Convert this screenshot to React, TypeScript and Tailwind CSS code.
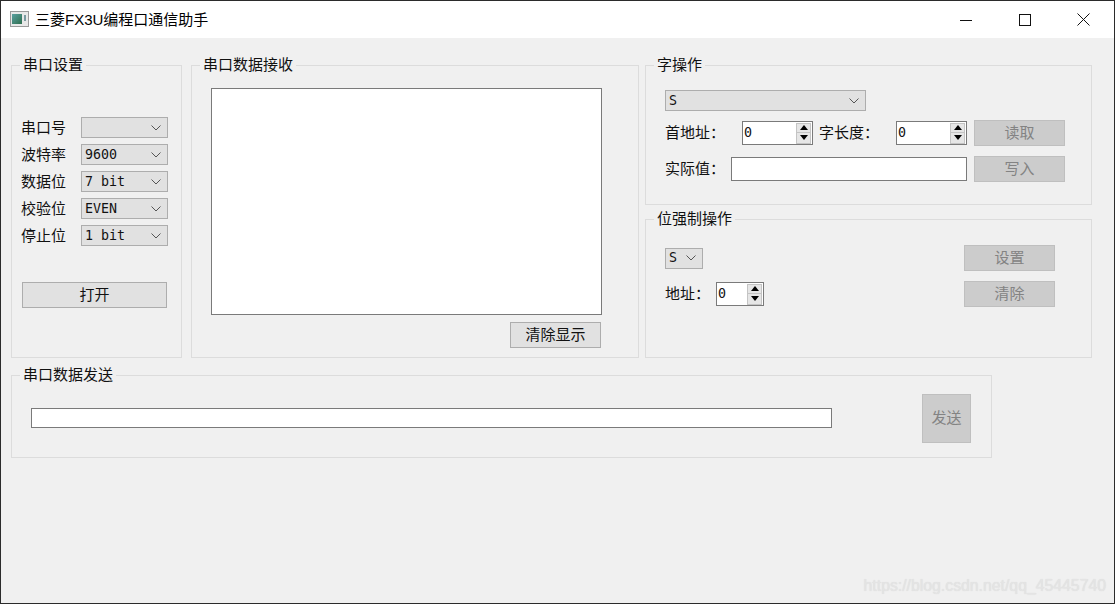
import React from 'react';

const monoFont = "font-['DejaVu_Sans_Mono','Noto_Sans_CJK_SC',monospace]";

const Group: React.FC<{ title: string; className: string; children?: React.ReactNode }> = ({ title, className, children }) => (
  <div className={`relative border border-[#dcdcdc] ${className}`}>
    <span className="absolute left-[8px] top-[-11px] bg-[#f0f0f0] px-[3px] text-[15px] leading-[20px] text-[#111]">{title}</span>
    {children}
  </div>
);

const Chevron = () => (
  <svg width="10" height="6" viewBox="0 0 10 6" className="shrink-0">
    <path d="M0.5 0.5 L5 5 L9.5 0.5" fill="none" stroke="#555" strokeWidth="1" />
  </svg>
);

const Combo: React.FC<{ value?: string; className: string }> = ({ value, className }) => (
  <div className={`flex h-[21px] items-center justify-between border border-[#adadad] bg-[#e1e1e1] pl-[3px] pr-[6px] ${className}`}>
    <span className={`${monoFont} text-[13.3px] leading-none text-[#111]`}>{value}</span>
    <Chevron />
  </div>
);

const Spin: React.FC<{ className: string }> = ({ className }) => (
  <div className={`flex h-[24px] items-center justify-between border border-[#7a7a7a] bg-white pl-[1px] pr-[1px] ${className}`}>
    <span className={`${monoFont} text-[13.3px] leading-none text-[#111]`}>0</span>
    <div className="flex flex-col">
      <div className="flex h-[10px] w-[15px] items-center justify-center border border-[#c4c4c4] bg-[#e6e6e6]">
        <svg width="8" height="5" viewBox="0 0 8 5"><path d="M4 0 L8 5 L0 5 Z" fill="#000" /></svg>
      </div>
      <div className="flex h-[11px] w-[15px] items-center justify-center border border-t-0 border-[#c4c4c4] bg-[#e6e6e6]">
        <svg width="8" height="5" viewBox="0 0 8 5"><path d="M0 0 L8 0 L4 5 Z" fill="#000" /></svg>
      </div>
    </div>
  </div>
);

const Btn: React.FC<{ label: string; className: string; disabled?: boolean }> = ({ label, className, disabled }) => (
  <div
    className={`flex items-center justify-center border text-[15px] ${
      disabled ? 'border-[#bfbfbf] bg-[#cccccc] text-[#838383]' : 'border-[#adadad] bg-[#e1e1e1] text-[#111]'
    } ${className}`}
  >
    {label}
  </div>
);

const serialRows = [
  { label: '串口号', value: '' },
  { label: '波特率', value: '9600' },
  { label: '数据位', value: '7 bit' },
  { label: '校验位', value: 'EVEN' },
  { label: '停止位', value: '1 bit' },
];

export default function App() {
  return (
    <div className="h-[604px] w-[1115px] overflow-hidden bg-[#2b2b2b] p-[1px] font-['Liberation_Sans','Noto_Sans_CJK_SC',sans-serif] text-[15px] text-[#111]">
      <div className="relative flex h-[602px] flex-col bg-[#f0f0f0]">
        {/* title bar */}
        <div className="flex h-[37px] shrink-0 items-center bg-white pl-[9px]">
          <svg width="19" height="16" viewBox="0 0 19 16" className="mt-[-1px]">
            <rect x="0.5" y="0.5" width="18" height="15" fill="#e8e8e8" stroke="#9a9a9a" />
            <defs>
              <linearGradient id="ico" x1="0" y1="0" x2="1" y2="1">
                <stop offset="0" stopColor="#5aa0a0" />
                <stop offset="1" stopColor="#2f6f4f" />
              </linearGradient>
            </defs>
            <rect x="2" y="3" width="10" height="10" fill="url(#ico)" />
            <rect x="14" y="4" width="2" height="6" fill="#7a9aa0" />
          </svg>
          <span className="ml-[6px] mt-[2px] text-[15px] text-black">三菱FX3U编程口通信助手</span>
          <div className="ml-auto mr-[1px] flex h-full">
            <div className="flex w-[59px] items-center justify-center">
              <svg width="12" height="12" viewBox="0 0 12 12"><path d="M0 6.5 H12" stroke="#111" strokeWidth="1" /></svg>
            </div>
            <div className="flex w-[59px] items-center justify-center">
              <svg width="12" height="12" viewBox="0 0 12 12"><rect x="0.5" y="0.5" width="11" height="11" fill="none" stroke="#111" /></svg>
            </div>
            <div className="flex w-[59px] items-center justify-center">
              <svg width="13" height="13" viewBox="0 0 13 13"><path d="M0.5 0.5 L12.5 12.5 M12.5 0.5 L0.5 12.5" stroke="#111" strokeWidth="1" /></svg>
            </div>
          </div>
        </div>

        <div className="px-[10px] pt-[27px]">
          <div className="flex h-[293px]">
            <Group title="串口设置" className="w-[171px] pl-[10px] pt-[51px]">
              <div className="flex flex-col gap-[6px]">
                {serialRows.map((r) => (
                  <div key={r.label} className="flex items-center">
                    <span className="ml-[-1px] w-[60px] leading-[21px]">{r.label}</span>
                    <Combo value={r.value} className="w-[87px]" />
                  </div>
                ))}
              </div>
              <Btn label="打开" className="mt-[36px] h-[26px] w-[145px]" />
            </Group>

            <Group title="串口数据接收" className="ml-[9px] w-[448px] pl-[19px] pt-[22px]">
              <div className="h-[227px] w-[391px] border border-[#7a7a7a] bg-white" />
              <div className="flex w-[390px] justify-end pt-[7px]">
                <Btn label="清除显示" className="h-[26px] w-[91px]" />
              </div>
            </Group>

            <div className="ml-[6px] flex w-[447px] flex-col justify-between">
              <Group title="字操作" className="h-[140px] pl-[19px] pt-[24px]">
                <Combo value="S" className="w-[201px]" />
                <div className="mt-[9px] flex h-[26px] items-center">
                  <span className="w-[77px]">首地址：</span>
                  <Spin className="w-[71px]" />
                  <span className="ml-[6px] w-[77px]">字长度：</span>
                  <Spin className="w-[71px]" />
                  <Btn label="读取" disabled className="ml-[7px] h-[26px] w-[91px]" />
                </div>
                <div className="mt-[10px] flex h-[26px] items-center">
                  <span className="w-[66px]">实际值：</span>
                  <div className="h-[24px] w-[236px] border border-[#7a7a7a] bg-white" />
                  <Btn label="写入" disabled className="ml-[7px] h-[26px] w-[91px]" />
                </div>
              </Group>
              <Group title="位强制操作" className="h-[139px] pl-[19px] pr-[36px] pt-[25px]">
                <div className="flex h-[26px] items-center justify-between">
                  <Combo value="S" className="w-[38px]" />
                  <Btn label="设置" disabled className="h-[26px] w-[91px]" />
                </div>
                <div className="mt-[10px] flex h-[26px] items-center">
                  <span className="w-[51px]">地址：</span>
                  <Spin className="w-[48px]" />
                  <Btn label="清除" disabled className="ml-auto h-[26px] w-[91px]" />
                </div>
              </Group>
            </div>
          </div>

          <Group title="串口数据发送" className="mt-[17px] flex h-[83px] w-[981px] items-center pb-[15px] pl-[19px] pt-[18px]">
            <div className="h-[20px] w-[801px] border border-[#7a7a7a] bg-white" />
            <Btn label="发送" disabled className="ml-[90px] h-[49px] w-[49px]" />
          </Group>
        </div>

        {/* blog watermark over the window */}
        <span className="absolute right-[8px] top-[575px] text-[15.8px] leading-[20px] text-[#e4e4e4] [text-shadow:0_0_1px_#d8d8d8]">
          https://blog.csdn.net/qq_45445740
        </span>
      </div>
    </div>
  );
}
